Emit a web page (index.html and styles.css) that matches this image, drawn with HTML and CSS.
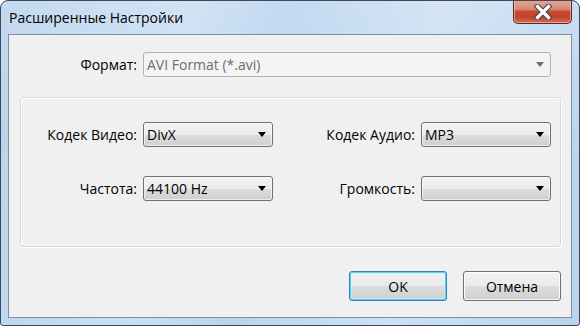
FILE: index.html
```html
<!DOCTYPE html>
<html>
<head>
<meta charset="utf-8">
<link rel="stylesheet" href="styles.css">
</head>
<body>
<div class="window">
  <div class="titlebar">
    <span class="title">Расширенные Настройки</span>
    <button class="close" aria-label="Закрыть">
      <svg width="22" height="16" viewBox="0 0 22 16">
        <path d="M5.5 2.5 L16.5 13.5 M16.5 2.5 L5.5 13.5" stroke="#4a4a4a" stroke-width="5.5" stroke-linecap="square" fill="none"/>
        <path d="M5.5 2.5 L16.5 13.5 M16.5 2.5 L5.5 13.5" stroke="#ffffff" stroke-width="3.2" stroke-linecap="square" fill="none"/>
      </svg>
    </button>
  </div>
  <div class="client">
    <div class="format-row">
      <span class="label format-label">Формат:</span>
      <div class="combo combo-disabled combo-wide">
        <span class="combo-text">AVI Format (*.avi)</span>
        <span class="arrow"></span>
      </div>
    </div>
    <div class="group">
      <span class="label">Кодек Видео:</span>
      <div class="combo"><span class="combo-text">DivX</span><span class="arrow"></span></div>
      <span class="label">Кодек Аудио:</span>
      <div class="combo"><span class="combo-text">MP3</span><span class="arrow"></span></div>
      <span class="label">Частота:</span>
      <div class="combo"><span class="combo-text">44100 Hz</span><span class="arrow"></span></div>
      <span class="label">Громкость:</span>
      <div class="combo"><span class="combo-text"></span><span class="arrow"></span></div>
    </div>
    <div class="buttons">
      <button class="btn btn-default">OK</button>
      <button class="btn">Отмена</button>
    </div>
  </div>
</div>
</body>
</html>
```

FILE: styles.css
```css
html, body {
  margin: 0;
  padding: 0;
  background: #ffffff;
}

body {
  font-family: "Open Sans", "Noto Sans", sans-serif;
  font-size: 14px;
  color: #000;
}

.window {
  box-sizing: border-box;
  width: 580px;
  height: 326px;
  border: 1px solid #3f4854;
  border-radius: 8px 8px 3px 3px;
  background:
    linear-gradient(100deg, rgba(255,255,255,0) 0%, rgba(255,255,255,0.25) 30%, rgba(255,255,255,0) 45%, rgba(255,255,255,0.3) 70%, rgba(255,255,255,0) 100%),
    linear-gradient(180deg, #c3daf1 0%, #b9d3ee 40%, #bad4ee 100%);
  display: flex;
  flex-direction: column;
  overflow: hidden;
}

.titlebar {
  height: 33px;
  display: flex;
  align-items: flex-start;
  justify-content: space-between;
  flex: none;
}

.title {
  margin-left: 8px;
  margin-top: 7px;
  font-size: 14px;
  line-height: 20px;
  color: #000;
}

.close {
  box-sizing: border-box;
  width: 59px;
  height: 24px;
  margin-right: 7px;
  margin-top: -1px;
  padding: 0;
  border: 1px solid #5a2a22;
  border-top: none;
  border-radius: 0 0 5px 5px;
  background: linear-gradient(180deg, #e8a596 0%, #d88a78 40%, #c74a31 50%, #c2422b 75%, #d2705c 100%);
  box-shadow: inset 0 0 0 1px rgba(255,210,200,0.55);
  display: flex;
  align-items: center;
  justify-content: center;
}

.client {
  box-sizing: border-box;
  flex: 1;
  margin: 0 7px 7px 7px;
  border: 1px solid #7f8f9f;
  background: #f0f0f0;
  display: flex;
  flex-direction: column;
}

.format-row {
  display: flex;
  align-items: center;
  margin-top: 17px;
}

.label {
  white-space: nowrap;
  text-align: right;
  color: #000;
}

.format-label {
  width: 128px;
  margin-right: 6px;
}

.combo {
  box-sizing: border-box;
  height: 25px;
  border: 1px solid #707070;
  border-radius: 3px;
  background: linear-gradient(180deg, #f3f3f3 0%, #ebebeb 50%, #dddddd 51%, #cfcfcf 100%);
  box-shadow: inset 0 0 0 1px rgba(255,255,255,0.6);
  display: flex;
  align-items: center;
  justify-content: space-between;
  padding: 0 6px 0 3px;
}

.combo-text {
  color: #000;
  line-height: 20px;
}

.arrow {
  width: 0;
  height: 0;
  border-left: 4.5px solid transparent;
  border-right: 4.5px solid transparent;
  border-top: 5px solid #000;
}

.combo-wide {
  width: 408px;
}

.combo-disabled {
  border-color: #adb2b5;
  background: #f4f4f4;
  box-shadow: none;
}

.combo-disabled .combo-text {
  color: #6d6d6d;
}

.combo-disabled .arrow {
  border-top-color: #6d6d6d;
}

.group {
  box-sizing: border-box;
  width: 541px;
  height: 150px;
  margin: 20px 0 0 11px;
  border: 1px solid #d0dce4;
  border-radius: 3px;
  box-shadow: inset 1px 1px 0 #ffffff, 1px 1px 0 #ffffff;
  display: grid;
  grid-template-columns: 116px 130px 136px 130px;
  grid-auto-rows: 25px;
  column-gap: 6px;
  row-gap: 29px;
  align-items: center;
  padding-top: 24px;
}

.buttons {
  display: flex;
  justify-content: flex-end;
  gap: 16px;
  margin-top: 24px;
  margin-right: 10px;
}

.btn {
  box-sizing: border-box;
  width: 98px;
  height: 30px;
  padding: 0;
  font-family: "Open Sans", "Noto Sans", sans-serif;
  font-size: 14px;
  color: #000;
  border: 1px solid #707070;
  border-radius: 3px;
  background: linear-gradient(180deg, #f2f2f2 0%, #ebebeb 50%, #dddddd 51%, #cfcfcf 100%);
  box-shadow: inset 0 0 0 1px #fcfcfc;
}

.btn-default {
  border-color: #3c7fb1;
  box-shadow: inset 0 0 0 1px #5fd0f5, inset 0 0 0 2px rgba(200,240,255,0.5);
}
```
